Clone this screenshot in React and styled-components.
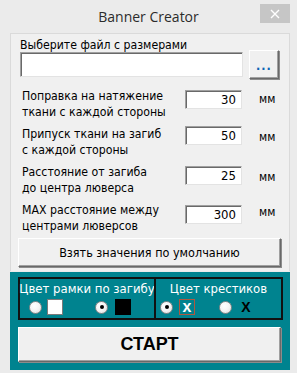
import React from 'react';
import styled, { createGlobalStyle } from 'styled-components';

const Global = createGlobalStyle`
  html, body {
    margin: 0;
    padding: 0;
    background: #ebebeb;
  }
  * {
    box-sizing: border-box;
  }
`;

const Window = styled.div`
  width: 297px;
  height: 373px;
  background: #ebebeb;
  font-family: 'DejaVu Sans Condensed', 'DejaVu Sans', sans-serif;
  font-size: 12.2px;
  color: #000;
  display: flex;
  flex-direction: column;
`;

const TitleBar = styled.div`
  height: 33px;
  flex-shrink: 0;
  display: grid;
  grid-template-columns: 1fr auto 1fr;
  align-items: start;
  .title {
    padding-top: 7px;
    font-family: 'Open Sans', 'Noto Sans', sans-serif;
    font-size: 14px;
    color: #2b2b2b;
  }
`;

const CloseButton = styled.div`
  justify-self: end;
  margin: 4px 7px 0 0;
  width: 30px;
  height: 19px;
  background: #c6c6c6;
  display: flex;
  align-items: center;
  justify-content: center;
`;

const Body = styled.div`
  flex: 1;
  padding: 0 7px 3px 10px;
  display: flex;
  flex-direction: column;
`;

const Panel = styled.div`
  height: 238px;
  flex-shrink: 0;
  background: #f0f0f0;
  border: 1px solid #dadada;
  border-bottom: none;
  padding: 3px 8px 0 7px;
  display: flex;
  flex-direction: column;
`;

const Label = styled.div`
  padding-left: 2px;
  line-height: 16px;
  white-space: nowrap;
`;

const FileRow = styled.div`
  display: flex;
  align-items: center;
  gap: 6px;
  margin-top: -3px;
  padding-left: 2px;
  flex-shrink: 0;
`;

const Sunken = styled.div`
  background: #fff;
  border: 1px solid #a0a0a0;
  border-right-color: #e3e3e3;
  border-bottom-color: #e3e3e3;
  box-shadow: inset 1px 1px 0 #696969;
  text-align: right;
  padding-right: 5px;
  font-size: 13px;
  line-height: ${(p) => p.h - 2}px;
  height: ${(p) => p.h}px;
  width: ${(p) => p.w}px;
`;

const RaisedButton = styled.div`
  flex-shrink: 0;
  background: #f0f0f0;
  border-top: 1px solid #fff;
  border-left: 1px solid #fff;
  border-right: 1px solid #696969;
  border-bottom: 1px solid #696969;
  box-shadow: inset -1px -1px 0 #a0a0a0, 1px 1px 0 #8c8c8c;
  display: flex;
  align-items: center;
  justify-content: center;
  height: ${(p) => p.h}px;
  width: ${(p) => (p.w ? `${p.w}px` : 'auto')};
  font-size: ${(p) => p.fs || 12.5}px;
  font-weight: ${(p) => (p.bold ? 700 : 400)};
  font-family: ${(p) => (p.bold ? "'Liberation Sans', Arial, sans-serif" : 'inherit')};
  color: #000;
`;

const Dots = styled.span`
  color: #0b63b5;
  font-weight: 700;
  letter-spacing: 1px;
  margin-top: 2px;
`;

const Rows = styled.div`
  display: flex;
  flex-direction: column;
  gap: 6px;
  margin-top: 9px;
`;

const Row = styled.div`
  display: grid;
  grid-template-columns: 1fr 58px 38px;
  align-items: start;
  padding-left: 2px;
  height: 32px;
  .unit {
    padding-left: 16px;
    padding-top: ${(p) => p.unitTop}px;
    font-size: 12px;
  }
  .field {
    padding-top: ${(p) => p.fieldTop}px;
  }
`;

const DefaultButton = styled(RaisedButton)`
  margin-top: 4px;
`;

const Teal = styled.div`
  margin-top: 1px;
  flex: 1;
  background: #00838f;
  padding: 5px 8px 0 8px;
  display: flex;
  flex-direction: column;
`;

const Groups = styled.div`
  height: 43px;
  flex-shrink: 0;
  border: 2px solid #111;
  margin-right: -1px;
  display: grid;
  grid-template-columns: 134px 1fr;
`;

const Group = styled.div`
  border-left: ${(p) => (p.divided ? '2px solid #111' : 'none')};
  color: #fff;
  font-size: 13px;
  display: flex;
  flex-direction: column;
  align-items: center;
  padding-top: 2px;
  .caption {
    line-height: 16px;
    white-space: nowrap;
  }
`;

const Options = styled.div`
  display: flex;
  width: 100%;
  padding-left: ${(p) => p.pl}px;
  gap: ${(p) => p.gap}px;
  margin-top: 2px;
`;

const Option = styled.div`
  display: flex;
  align-items: center;
  gap: ${(p) => p.gap || 5}px;
`;

const Radio = styled.span`
  width: 13px;
  height: 13px;
  border-radius: 50%;
  border: 1px solid #8a8a8a;
  background: radial-gradient(circle at 40% 35%, #ffffff 0%, #f4f4f4 50%, #d8d8d8 100%);
  display: flex;
  align-items: center;
  justify-content: center;
  &::after {
    content: '';
    width: 4px;
    height: 4px;
    border-radius: 50%;
    background: ${(p) => (p.checked ? '#000' : 'transparent')};
  }
`;

const Swatch = styled.span`
  width: 16px;
  height: 16px;
  background: ${(p) => p.color};
  border: 1px solid ${(p) => (p.color === '#fff' ? '#7a7a7a' : '#000')};
`;

const Cross = styled.span`
  width: 16px;
  height: 16px;
  display: flex;
  align-items: center;
  justify-content: center;
  font-family: 'Liberation Sans', Arial, sans-serif;
  font-weight: 700;
  font-size: ${(p) => (p.framed ? 16 : 14)}px;
  line-height: 14px;
  color: ${(p) => p.color};
  border: 1px solid ${(p) => (p.framed ? '#b0583f' : 'transparent')};
`;

const StartButton = styled(RaisedButton)`
  margin-top: 7px;
  margin-right: 1px;
`;

const rows = [
  ['Поправка на натяжение', 'ткани с каждой стороны', '30', 2, 4],
  ['Припуск ткани на загиб', 'с каждой стороны', '50', 0, 4],
  ['Расстояние от загиба', 'до центра люверса', '25', 2, 6],
  ['MAX расстояние между', 'центрами люверсов', '300', 3, 3],
];

export default function App() {
  return (
    <>
      <Global />
      <Window>
        <TitleBar>
          <span />
          <span className="title">Banner Creator</span>
          <CloseButton>
            <svg width="10" height="10" viewBox="0 0 10 10">
              <path d="M1 1 L9 9 M9 1 L1 9" stroke="#fff" strokeWidth="1.4" />
            </svg>
          </CloseButton>
        </TitleBar>
        <Body>
          <Panel>
            <Label>Выберите файл с размерами</Label>
            <FileRow>
              <Sunken w={223} h={25} />
              <RaisedButton w={30} h={29}>
                <Dots>...</Dots>
              </RaisedButton>
            </FileRow>
            <Rows>
              {rows.map(([a, b, v, ft, ut]) => (
                <Row key={a} fieldTop={ft} unitTop={ut}>
                  <Label>
                    {a}
                    <br />
                    {b}
                  </Label>
                  <div className="field">
                    <Sunken w={57} h={19}>
                      {v}
                    </Sunken>
                  </div>
                  <span className="unit">мм</span>
                </Row>
              ))}
            </Rows>
            <DefaultButton h={29}>Взять значения по умолчанию</DefaultButton>
          </Panel>
          <Teal>
            <Groups>
              <Group>
                <span className="caption">Цвет рамки по загибу</span>
                <Options pl={9} gap={32}>
                  <Option>
                    <Radio />
                    <Swatch color="#fff" />
                  </Option>
                  <Option gap={7}>
                    <Radio checked />
                    <Swatch color="#000" />
                  </Option>
                </Options>
              </Group>
              <Group divided>
                <span className="caption">Цвет крестиков</span>
                <Options pl={4} gap={24}>
                  <Option gap={6}>
                    <Radio checked />
                    <Cross color="#fff" framed>
                      x
                    </Cross>
                  </Option>
                  <Option gap={6}>
                    <Radio />
                    <Cross color="#000">X</Cross>
                  </Option>
                </Options>
              </Group>
            </Groups>
            <StartButton h={35} fs={18} bold>
              СТАРТ
            </StartButton>
          </Teal>
        </Body>
      </Window>
    </>
  );
}
